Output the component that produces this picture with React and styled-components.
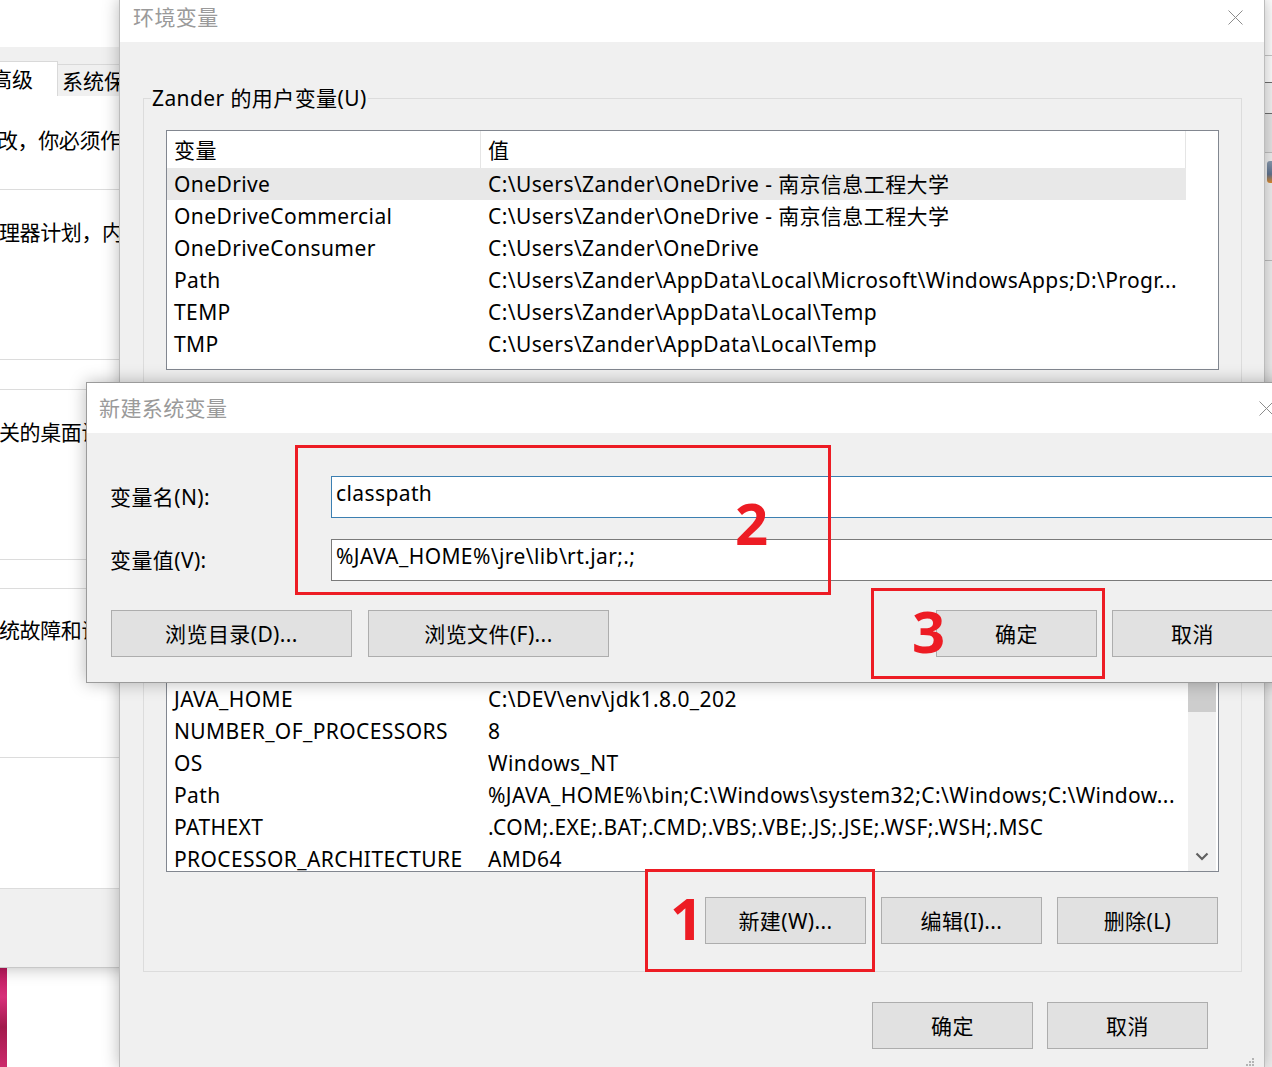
import styled, { createGlobalStyle } from "styled-components";

const GlobalStyle = createGlobalStyle`
  html, body { margin: 0; padding: 0; background: #fff; }
  body {
    font-family: "Noto Sans", "Noto Sans CJK SC", sans-serif;
    font-size: 21px;
    line-height: 28px;
    letter-spacing: 0.4px;
    color: #000;
  }
  *, *::before, *::after { box-sizing: border-box; }
`;

const userVars = [
  ["OneDrive", "C:\\Users\\Zander\\OneDrive - 南京信息工程大学"],
  ["OneDriveCommercial", "C:\\Users\\Zander\\OneDrive - 南京信息工程大学"],
  ["OneDriveConsumer", "C:\\Users\\Zander\\OneDrive"],
  ["Path", "C:\\Users\\Zander\\AppData\\Local\\Microsoft\\WindowsApps;D:\\Progr..."],
  ["TEMP", "C:\\Users\\Zander\\AppData\\Local\\Temp"],
  ["TMP", "C:\\Users\\Zander\\AppData\\Local\\Temp"],
];

const systemVars = [
  ["ComSpec", "C:\\Windows\\system32\\cmd.exe"],
  ["DriverData", "C:\\Windows\\System32\\Drivers\\DriverData"],
  ["FPS_BROWSER_APP_PROFILE_STRING", "Internet Explorer"],
  ["FPS_BROWSER_USER_PROFILE_STRING", "Default"],
  ["JAVA_HOME", "C:\\DEV\\env\\jdk1.8.0_202"],
  ["NUMBER_OF_PROCESSORS", "8"],
  ["OS", "Windows_NT"],
  ["Path", "%JAVA_HOME%\\bin;C:\\Windows\\system32;C:\\Windows;C:\\Window..."],
  ["PATHEXT", ".COM;.EXE;.BAT;.CMD;.VBS;.VBE;.JS;.JSE;.WSF;.WSH;.MSC"],
  ["PROCESSOR_ARCHITECTURE", "AMD64"],
  ["PROCESSOR_IDENTIFIER", "Intel64 Family 6 Model 142 Stepping 10, GenuineIntel"],
];

const Desktop = styled.div`
  position: relative;
  width: 1272px;
  height: 1067px;
  overflow: hidden;
  background: #fff;
`;

const Wallpaper = styled.div`
  position: absolute;
  left: 0;
  top: 967px;
  width: 7px;
  height: 100px;
  background: linear-gradient(180deg, #b8185a 0%, #d8307a 30%, #a21a4c 60%, #cc2a6c 100%);
`;

const Window = styled.div`
  position: absolute;
  left: ${(p) => p.$x}px;
  top: ${(p) => p.$y}px;
  width: ${(p) => p.$w}px;
  height: ${(p) => (p.$h ? `${p.$h}px` : "auto")};
  display: flex;
  flex-direction: column;
  overflow: hidden;
  background: ${(p) => p.$bg || "#f0f0f0"};
  border: 1px solid ${(p) => p.$edge || "#bcbcbc"};
  box-shadow: 0 0 16px rgba(0, 0, 0, 0.28);
`;

const TitleBar = styled.div`
  flex: none;
  height: ${(p) => p.$h}px;
  display: flex;
  align-items: center;
  justify-content: space-between;
  padding: 0 21px ${(p) => p.$pb || 0}px ${(p) => p.$pl || 12}px;
  background: #fff;
  color: #9a9a9a;
  white-space: nowrap;
`;

const CloseIcon = () => (
  <svg width="15" height="15" viewBox="0 0 15 15">
    <path d="M0.5 0.5L14.5 14.5M14.5 0.5L0.5 14.5" stroke="#8c8c8c" strokeWidth="1" fill="none" />
  </svg>
);

const SizeGrip = styled.svg`
  position: absolute;
  right: 9px;
  bottom: 0;
`;

/* ---------- system properties window behind ---------- */

const BgTitle = styled.div`
  flex: none;
  height: 47px;
  background: #fff;
`;

const TabStrip = styled.div`
  flex: none;
  height: 49px;
  display: flex;
  align-items: flex-end;
  background: #f0f0f0;
`;

const Tab = styled.div`
  flex: none;
  height: ${(p) => (p.$active ? 35 : 32)}px;
  display: flex;
  align-items: center;
  padding: 0 ${(p) => (p.$active ? 24 : 8)}px 0 ${(p) => (p.$active ? 28 : 4)}px;
  margin-left: ${(p) => (p.$active ? 0 : -1)}px;
  background: ${(p) => (p.$active ? "#fff" : "#f0f0f0")};
  border: 1px solid #d9d9d9;
  border-bottom: none;
  letter-spacing: 0;
  white-space: nowrap;
`;

const TabPage = styled.div`
  flex: 1;
  display: flex;
  flex-direction: column;
  background: #fff;
  letter-spacing: -0.4px;
`;

const Intro = styled.div`
  flex: none;
  height: 93px;
  padding: 30px 0 0 ${(p) => p.$indent}px;
  white-space: nowrap;
`;

const Section = styled.div`
  flex: none;
  height: ${(p) => p.$h}px;
  margin-top: ${(p) => p.$mt || 0}px;
  padding: ${(p) => p.$pt}px 0 0 ${(p) => p.$indent}px;
  border-top: 1px solid #dcdcdc;
  border-bottom: 1px solid #dcdcdc;
  white-space: nowrap;
`;

const Spacer = styled.div`
  flex: 1;
`;

const BgFooter = styled.div`
  flex: none;
  height: 79px;
  background: #f0f0f0;
  border-top: 1px solid #dcdcdc;
`;

/* ---------- far right window ---------- */

const FarStrip = styled.div`
  flex: none;
  height: ${(p) => p.$h}px;
  background: ${(p) => p.$bg || "#fff"};
  border-bottom: 1px solid ${(p) => p.$line || "#c8c8c8"};
`;

const FarIcon = styled.div`
  flex: none;
  margin: 8px 0 0 2px;
  width: 10px;
  height: 22px;
  background: linear-gradient(180deg, #8a9bb0 0%, #5f7390 60%, #e08a2a 100%);
  border-radius: 3px;
`;

/* ---------- environment variables window ---------- */

const EnvBody = styled.div`
  flex: 1;
  min-height: 0;
  display: flex;
  flex-direction: column;
  padding: 42px 22px 18px 23px;
`;

const Group = styled.fieldset`
  margin: ${(p) => p.$mt || 0}px 0 0;
  padding: 0 22px ${(p) => p.$pb || 0}px;
  border: 1px solid #dcdcdc;
  min-width: 0;
  min-height: 0;
  display: flex;
  flex-direction: column;
  flex: ${(p) => (p.$grow ? "1" : "none")};
  overflow: hidden;
`;

const GroupLabel = styled.legend`
  margin-left: -15px;
  padding: 0 1px;
  height: 28px;
  line-height: 28px;
  white-space: nowrap;
`;

const ListBox = styled.div`
  flex: none;
  margin-top: 18px;
  height: ${(p) => p.$h}px;
  display: flex;
  background: #fff;
  border: 1px solid #828790;
  overflow: hidden;
`;

const Columns = styled.div`
  flex: none;
  width: 1019px;
  display: flex;
  flex-direction: column;
`;

const Row = styled.div`
  flex: none;
  display: grid;
  grid-template-columns: 314px 705px;
  height: ${(p) => (p.$head ? 37 : 32)}px;
  background: ${(p) => (p.$selected ? "#e8e8e8" : "#fff")};
  white-space: nowrap;
`;

const Cell = styled.div`
  display: flex;
  align-items: center;
  padding-left: 7px;
  overflow: hidden;
  border-right: ${(p) => (p.$head ? "1px solid #e5e5e5" : "none")};
`;

const ScrollTrack = styled.div`
  flex: none;
  width: 28px;
  margin-left: 2px;
  display: flex;
  flex-direction: column;
  background: #f0f0f0;
`;

const ScrollArrow = styled.div`
  flex: none;
  height: 30px;
  display: flex;
  align-items: center;
  justify-content: center;
`;

const ScrollLane = styled.div`
  flex: 1;
`;

const ScrollThumb = styled.div`
  margin-top: ${(p) => p.$offset}px;
  height: ${(p) => p.$size}px;
  background: #cdcdcd;
`;

const ButtonRow = styled.div`
  flex: none;
  display: flex;
  justify-content: ${(p) => p.$justify || "flex-end"};
  gap: ${(p) => p.$gap ?? 15}px;
  margin-top: ${(p) => p.$mt || 0}px;
  padding-right: ${(p) => p.$pr || 0}px;
`;

const ButtonGroup = styled.div`
  display: flex;
  gap: ${(p) => p.$gap}px;
  margin-left: ${(p) => p.$ml || 0}px;
`;

const Button = styled.button`
  flex: none;
  width: ${(p) => p.$w || 161}px;
  height: 47px;
  padding: 0;
  background: #e1e1e1;
  border: 1px solid #adadad;
  font: inherit;
  line-height: 28px;
  letter-spacing: inherit;
  color: #000;
  white-space: nowrap;
`;

/* ---------- new system variable dialog ---------- */

const DialogBody = styled.div`
  display: flex;
  flex-direction: column;
  padding: 43px 22px 25px 23px;
`;

const FormGrid = styled.div`
  display: grid;
  grid-template-columns: 221px 1fr;
  row-gap: 21px;
  align-items: center;
`;

const FieldLabel = styled.div`
  white-space: nowrap;
`;

const TextField = styled.div`
  height: 42px;
  padding: 2px 4px 0;
  background: #fff;
  border: 1px solid ${(p) => (p.$focused ? "#3c7fb1" : "#7a7a7a")};
  white-space: nowrap;
  overflow: hidden;
`;

/* ---------- red annotations ---------- */

const Callout = styled.div`
  position: absolute;
  left: ${(p) => p.$x}px;
  top: ${(p) => p.$y}px;
  width: ${(p) => p.$w}px;
  height: ${(p) => p.$h}px;
  border: 3px solid #ed1c24;
  pointer-events: none;
`;

const CalloutNumber = styled.span`
  position: absolute;
  left: ${(p) => p.$nx}px;
  top: ${(p) => p.$ny}px;
  font-family: "Noto Sans", sans-serif;
  font-weight: 700;
  font-size: 58px;
  line-height: 58px;
  letter-spacing: 0;
  color: #ed1c24;
`;

const VarList = ({ rows, height, selected, scrollbar }) => (
  <ListBox $h={height}>
    <Columns>
      <Row $head>
        <Cell $head>变量</Cell>
        <Cell $head>值</Cell>
      </Row>
      {rows.map(([name, value], i) => (
        <Row key={name + i} $selected={i === selected}>
          <Cell>{name}</Cell>
          <Cell>{value}</Cell>
        </Row>
      ))}
    </Columns>
    {scrollbar && (
      <ScrollTrack>
        <ScrollArrow />
        <ScrollLane>
          <ScrollThumb $offset={112} $size={52} />
        </ScrollLane>
        <ScrollArrow>
          <svg width="14" height="9" viewBox="0 0 14 9">
            <path d="M1.5 1.5L7 7L12.5 1.5" stroke="#606060" strokeWidth="2.2" fill="none" />
          </svg>
        </ScrollArrow>
      </ScrollTrack>
    )}
  </ListBox>
);

const App = () => (
  <>
    <GlobalStyle />
    <Desktop>
      <Wallpaper />

      <Window $x={-39} $y={-1} $w={200} $h={969} $bg="#fff" $edge="#c8c8c8">
        <BgTitle />
        <TabStrip>
          <Tab $active>高级</Tab>
          <Tab>系统保护</Tab>
        </TabStrip>
        <TabPage>
          <Intro $indent={35}>改，你必须作为管理员登录。</Intro>
          <Section $h={171} $pt={28} $indent={37}>理器计划，内存使用，以及虚拟内存</Section>
          <Section $h={171} $mt={29} $pt={28} $indent={37}>关的桌面设置</Section>
          <Section $h={170} $mt={28} $pt={27} $indent={37}>统故障和调试信息</Section>
          <Spacer />
          <BgFooter />
        </TabPage>
      </Window>

      <Window $x={1264} $y={-1} $w={60} $h={1069} $edge="#a8a8a8">
        <FarStrip $h={56} />
        <FarStrip $h={27} $line="#6d6d6d" />
        <FarStrip $h={31} $line="#6d6d6d" $bg="#f4f4f4" />
        <FarStrip $h={39} $bg="#e6e6e6" $line="#c0c0c0" />
        <FarIcon />
        <FarStrip $h={78} $bg="#f0f0f0" $line="#bdbdbd" />
      </Window>

      <Window $x={119} $y={-1} $w={1146} $h={1069}>
        <TitleBar $h={42} $pl={13} $pb={8}>
          环境变量
          <CloseIcon />
        </TitleBar>
        <EnvBody>
          <Group $grow>
            <GroupLabel>Zander 的用户变量(U)</GroupLabel>
            <VarList rows={userVars} height={240} selected={0} />
            <ButtonRow $mt={25} $pr={1}>
              <Button>新建(N)...</Button>
              <Button>编辑(E)...</Button>
              <Button>删除(D)</Button>
            </ButtonRow>
          </Group>
          <Group $mt={12} $pb={27}>
            <GroupLabel>系统变量(S)</GroupLabel>
            <VarList rows={systemVars} height={355} scrollbar />
            <ButtonRow $mt={25} $pr={1}>
              <Button>新建(W)...</Button>
              <Button>编辑(I)...</Button>
              <Button>删除(L)</Button>
            </ButtonRow>
          </Group>
          <ButtonRow $mt={30} $pr={34} $gap={14}>
            <Button>确定</Button>
            <Button>取消</Button>
          </ButtonRow>
        </EnvBody>
        <SizeGrip width="10" height="10" viewBox="0 0 10 10">
          <rect x="7" y="1" width="2" height="2" fill="#b4b4b4" />
          <rect x="4" y="4" width="2" height="2" fill="#b4b4b4" />
          <rect x="7" y="4" width="2" height="2" fill="#b4b4b4" />
          <rect x="1" y="7" width="2" height="2" fill="#b4b4b4" />
          <rect x="4" y="7" width="2" height="2" fill="#b4b4b4" />
          <rect x="7" y="7" width="2" height="2" fill="#b4b4b4" />
        </SizeGrip>
      </Window>

      <Window $x={86} $y={382} $w={1210} $edge="#9b9b9b">
        <TitleBar $h={50}>
          新建系统变量
          <CloseIcon />
        </TitleBar>
        <DialogBody>
          <FormGrid>
            <FieldLabel>变量名(N):</FieldLabel>
            <TextField $focused>classpath</TextField>
            <FieldLabel>变量值(V):</FieldLabel>
            <TextField>%JAVA_HOME%\jre\lib\rt.jar;.;</TextField>
          </FormGrid>
          <ButtonRow $justify="space-between" $mt={29}>
            <ButtonGroup $gap={16} $ml={1}>
              <Button $w={241}>浏览目录(D)...</Button>
              <Button $w={241}>浏览文件(F)...</Button>
            </ButtonGroup>
            <ButtonGroup $gap={15}>
              <Button>确定</Button>
              <Button>取消</Button>
            </ButtonGroup>
          </ButtonRow>
        </DialogBody>
      </Window>

      <Callout $x={295} $y={445} $w={536} $h={150}>
        <CalloutNumber $nx={437} $ny={46}>2</CalloutNumber>
      </Callout>
      <Callout $x={871} $y={588} $w={234} $h={91}>
        <CalloutNumber $nx={38} $ny={11}>3</CalloutNumber>
      </Callout>
      <Callout $x={645} $y={869} $w={230} $h={103}>
        <CalloutNumber $nx={22} $ny={17}>1</CalloutNumber>
      </Callout>
    </Desktop>
  </>
);

export default App;
